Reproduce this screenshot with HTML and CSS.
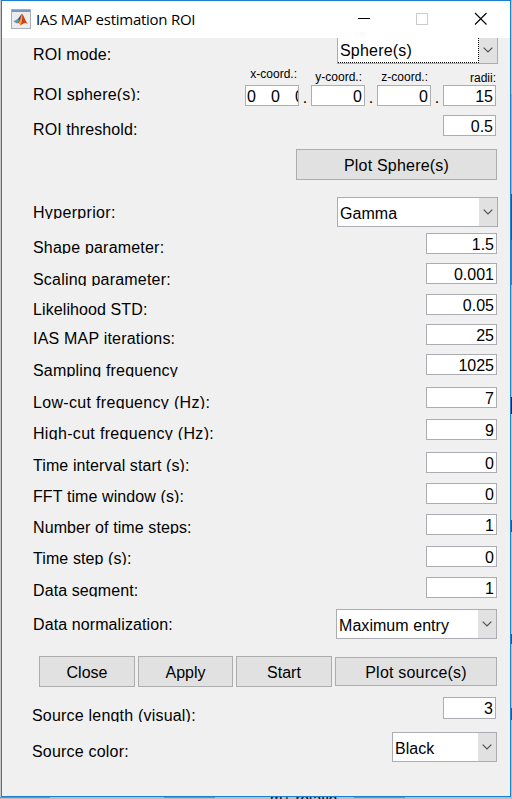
FILE: index.html
```html
<!DOCTYPE html>
<html lang="en">
<head>
<meta charset="utf-8">
<title>IAS MAP estimation ROI</title>
<link rel="stylesheet" href="styles.css">
</head>
<body>
<div class="window">
  <header class="titlebar">
    <svg class="logo" width="20" height="20" viewBox="0 0 20 20">
      <rect x=".5" y=".5" width="19" height="19" fill="#ececed" stroke="#a9adb3"/>
      <rect x="1" y="1" width="18" height="2" fill="#7199c4"/>
      <path d="M2.500 12.500 L6.500 10 L8.500 12 L6 14.500Z" fill="#4a9cc4"/>
      <path d="M6.500 10 C8 9.500 9 6 11 5 L8.500 12Z" fill="#245a8c"/>
      <path d="M11 5 C13 6 14 12 17 15 C14 13 12.500 14 9.500 16.500 C8.500 14 7.500 13.500 6 14.500 C9 12 9.500 6 11 5Z" fill="#c8401c"/>
      <path d="M11 5 C12 8 11 13 9.500 16.500 C9 14.500 8.500 14 7.500 14 C10 11 10 7 11 5Z" fill="#f2a33a"/>
    </svg>
    <h1 class="title">IAS MAP estimation ROI</h1>
    <svg class="controls" width="130" height="14" viewBox="0 0 130 14">
      <path d="M0 7.500H12" stroke="#000"/>
      <rect x="58.500" y="2.500" width="11" height="11" fill="none" stroke="#ccc"/>
      <path d="M117 2L128.500 13.500M128.500 2L117 13.500" stroke="#000" stroke-width="1.100"/>
    </svg>
  </header>
  <main class="form">
    <div class="row h-mode"><span class="label d7 tight">ROI mode:</span><div class="select wide open"><span>Sphere(s)</span><i class="arrow"><svg width="10" height="6"><path d="M.7.7L5 5L9.300.7"/></svg></i></div></div>
    <div class="row h-sphere"><span class="label d20 clip">ROI sphere(s):</span>
      <div class="coords">
        <div class="coord"><span class="cap c1">x-coord.:</span><div class="field multi">0&nbsp;&nbsp; 0&nbsp;&nbsp; 0</div></div>
        <span class="dot">.</span>
        <div class="coord"><span class="cap c2">y-coord.:</span><div class="field">0</div></div>
        <span class="dot">.</span>
        <div class="coord"><span class="cap c3">z-coord.:</span><div class="field">0</div></div>
        <span class="dot">.</span>
        <div class="coord last"><span class="cap c4">radii:</span><div class="field">15</div></div>
      </div>
    </div>
    <div class="row h34"><span class="label d5 tight">ROI threshold:</span><div class="field short">0.5</div></div>
    <div class="row h48"><span></span><div class="button plot">Plot Sphere(s)</div></div>
    <div class="row h36"><span class="label d6 clip loose">Hyperprior:</span><div class="select wide"><span>Gamma</span><i class="arrow"><svg width="10" height="6"><path d="M.7.7L5 5L9.300.7"/></svg></i></div></div>
    <div class="row h30"><span class="label d5 clip">Shape parameter:</span><div class="field">1.5</div></div>
    <div class="row h31"><span class="label d7 clip">Scaling parameter:</span><div class="field">0.001</div></div>
    <div class="row h30"><span class="label d6 tight">Likelihood STD:</span><div class="field">0.05</div></div>
    <div class="row h30"><span class="label d5">IAS MAP iterations:</span><div class="field">25</div></div>
    <div class="row h33"><span class="label d7 clip">Sampling frequency</span><div class="field">1025</div></div>
    <div class="row h32"><span class="label d6 clip loose">Low-cut frequency (Hz):</span><div class="field">7</div></div>
    <div class="row h33"><span class="label d5 clip loose">High-cut frequency (Hz):</span><div class="field">9</div></div>
    <div class="row h31"><span class="label d4 clip tight">Time interval start (s):</span><div class="field">0</div></div>
    <div class="row h31"><span class="label d4 clip tight">FFT time window (s):</span><div class="field">0</div></div>
    <div class="row h32"><span class="label d4 clip tight">Number of time steps:</span><div class="field">1</div></div>
    <div class="row h31"><span class="label d3 clip tight">Time step (s):</span><div class="field">0</div></div>
    <div class="row h32"><span class="label d4 clip tight">Data segment:</span><div class="field">1</div></div>
    <div class="row h47"><span class="label d6 tight">Data normalization:</span><div class="select wide inset"><span>Maximum entry</span><i class="arrow"><svg width="10" height="6"><path d="M.7.7L5 5L9.300.7"/></svg></i></div></div>
    <div class="actions">
      <div class="button">Close</div>
      <div class="button apply">Apply</div>
      <div class="button">Start</div>
      <div class="button sources">Plot source(s)</div>
    </div>
    <div class="row h35"><span class="label d9 clip out">Source length (visual):</span><div class="field short tall">3</div></div>
    <div class="row"><span class="label d10 out">Source color:</span><div class="select inset color"><span>Black</span><i class="arrow"><svg width="10" height="6"><path d="M.7.7L5 5L9.300.7"/></svg></i></div></div>
  </main>
</div>
<div class="behind"><i class="edge e1"></i><i class="edge e2"></i><span class="peek">m+ rotatio</span><i class="edge e3"></i></div>
</body>
</html>
```
FILE: styles.css
```css
* { box-sizing: border-box; }
body {
  margin: 0;
  height: 799px;
  padding: 0 1px;
  overflow: hidden;
  background:
    linear-gradient(#a9c9e6 0 94px, #8fb4d4 94px 194px, #1c5f80 194px 240px, #3f7f9f 240px 285px, #9cc4e4 285px 397px, #001a50 397px 414px, #a9d0f0 414px 520px, #305070 520px 532px, #a0ccf0 532px 634px, #0a5aa8 634px 644px, #9cc8ec 644px 708px, #0a60b8 708px 720px, #a8c4dc 720px) right / 1px 100% no-repeat,
    #c6c8cb;
  font: 16px/18px "Liberation Sans", Arial, sans-serif;
  color: #000;
}
.window {
  height: 797px;
  border: 1px solid #1a80d2;
  background: #f0f0f0;
}
.titlebar {
  display: flex;
  align-items: flex-start;
  height: 37px;
  padding: 8px 22px 0 9px;
  background: #fff;
}
.title {
  margin: 0 0 0 5px;
  font: 15px/20px "Open Sans", sans-serif;
  letter-spacing: -0.26px;
  white-space: nowrap;
}
.controls { margin: 2px 0 0 auto; }
.form { padding: 0 13px 0 31px; }
.row {
  display: flex;
  justify-content: space-between;
  align-items: flex-start;
}
.label {
  height: 20px;
  line-height: 20px;
  white-space: nowrap;
  letter-spacing: 0.2px;
}
.tight { letter-spacing: 0.1px; }
.loose { letter-spacing: 0.32px; }
.clip { height: 16px; overflow: hidden; }
.out { margin-left: -1px; }
.d3 { margin-top: 3px; }
.d4 { margin-top: 4px; }
.d5 { margin-top: 5px; }
.d6 { margin-top: 6px; }
.d7 { margin-top: 7px; }
.d9 { margin-top: 9px; }
.d10 { margin-top: 10px; }
.d20 { margin-top: 19px; }
.h-mode { height: 28px; }
.h-sphere { height: 49px; }
.h30 { height: 30px; }
.h31 { height: 31px; }
.h32 { height: 32px; }
.h33 { height: 33px; }
.h34 { height: 34px; }
.h35 { height: 35px; }
.h36 { height: 36px; }
.h47 { height: 47px; }
.h48 { height: 48px; }

.field {
  width: 71px;
  height: 21px;
  padding: 2px 2px 0 1px;
  border: 1px solid #abadb3;
  background: #fff;
  line-height: 18px;
  text-align: right;
  white-space: nowrap;
  overflow: hidden;
}
.short { width: 53px; margin-right: 1px; }
.tall { height: 22px; }

.coords { display: flex; margin-right: 1px; }
.coord { display: flex; flex-direction: column; width: 54px; }
.coord .field { width: 100%; }
.coord.last { width: 53px; }
.coord .multi { text-align: left; word-spacing: 0.6px; }
.cap {
  height: 19px;
  padding-top: 1px;
  font-size: 12px;
  line-height: 14px;
  text-align: right;
  white-space: nowrap;
}
.c1 { padding-right: 2px; }
.c2 { padding: 4px 3px 0 0; }
.c3 { padding: 4px 3px 0 0; }
.c4 { padding-top: 5px; }
.dot { width: 12px; margin-top: 23px; text-align: center; }

.select {
  display: flex;
  justify-content: space-between;
  height: 30px;
  padding-left: 2px;
  border: 1px solid #abadb3;
  background: #fff;
  line-height: 32px;
  letter-spacing: 0.05px;
}
.wide { width: 161px; margin-right: -1px; }
.inset { margin-right: 0; }
.color { width: 105px; }
.arrow {
  display: flex;
  align-items: center;
  justify-content: center;
  width: 18px;
  background: #e1e1e1;
}
.arrow path { fill: none; stroke: #505050; stroke-width: 1.2; }
.open {
  position: relative;
  height: 26px;
  border-top: 0;
  line-height: 26px;
  letter-spacing: 0.2px;
}
.open .arrow { padding-bottom: 2px; }
.open::after {
  content: "";
  position: absolute;
  inset: 0 18px 0 0;
  border: 1px dotted #000;
  border-width: 0 1px 1px 0;
}

.button {
  width: 96px;
  height: 31px;
  border: 1px solid #adadad;
  background: #e1e1e1;
  text-align: center;
  line-height: 31px;
}
.plot { width: 201px; letter-spacing: 0.2px; }
.actions {
  display: flex;
  align-items: center;
  gap: 3px;
  height: 31px;
  margin: 0 0 10px 6px;
}
.apply { width: 95px; }
.sources { width: 162px; height: 29px; line-height: 29px; letter-spacing: 0.2px; }

.behind {
  display: flex;
  height: 2px;
  overflow: hidden;
  margin: 0 -1px;
  background: #bcbfc2;
}
.edge { height: 1px; background: #858b90; }
.e1 { width: 50px; }
.e2 { width: 51px; margin-left: 114px; }
.e3 { width: 51px; }
.peek {
  width: 84px;
  height: 16px;
  margin: -6px 0 0 55px;
  line-height: 16px;
  font-size: 15px;
  white-space: nowrap;
}
```
